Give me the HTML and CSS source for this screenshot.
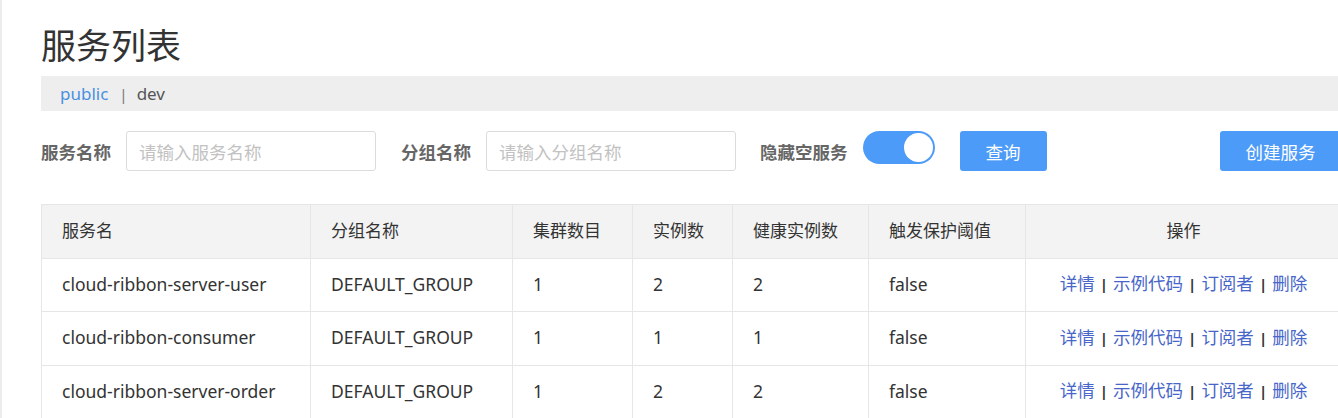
FILE: index.html
```html
<!DOCTYPE html>
<html lang="zh-CN">
<head>
<meta charset="utf-8">
<title>服务列表</title>
<link rel="stylesheet" href="styles.css">
</head>
<body>
<div class="page">
  <div class="content">
    <h1 class="title">服务列表</h1>
    <div class="ns-bar">
      <span class="ns ns-active">public</span>
      <span class="ns-sep">|</span>
      <span class="ns">dev</span>
    </div>
    <div class="filters">
      <label class="f-label">服务名称</label>
      <input class="f-input" type="text" placeholder="请输入服务名称">
      <label class="f-label f-label-2">分组名称</label>
      <input class="f-input" type="text" placeholder="请输入分组名称">
      <label class="f-label f-label-3">隐藏空服务</label>
      <span class="switch"><span class="knob"></span></span>
      <button class="btn btn-query">查询</button>
      <button class="btn btn-create">创建服务</button>
    </div>
    <table class="grid">
      <colgroup>
        <col class="c1"><col class="c2"><col class="c3"><col class="c4"><col class="c5"><col class="c6"><col class="c7">
      </colgroup>
      <thead>
        <tr>
          <th>服务名</th><th>分组名称</th><th>集群数目</th><th>实例数</th><th>健康实例数</th><th>触发保护阈值</th><th class="center">操作</th>
        </tr>
      </thead>
      <tbody>
        <tr>
          <td>cloud-ribbon-server-user</td><td>DEFAULT_GROUP</td><td>1</td><td>2</td><td>2</td><td>false</td>
          <td class="center"><a class="op">详情</a><span class="op-sep">|</span><a class="op">示例代码</a><span class="op-sep">|</span><a class="op">订阅者</a><span class="op-sep">|</span><a class="op">删除</a></td>
        </tr>
        <tr>
          <td>cloud-ribbon-consumer</td><td>DEFAULT_GROUP</td><td>1</td><td>1</td><td>1</td><td>false</td>
          <td class="center"><a class="op">详情</a><span class="op-sep">|</span><a class="op">示例代码</a><span class="op-sep">|</span><a class="op">订阅者</a><span class="op-sep">|</span><a class="op">删除</a></td>
        </tr>
        <tr>
          <td>cloud-ribbon-server-order</td><td>DEFAULT_GROUP</td><td>1</td><td>2</td><td>2</td><td>false</td>
          <td class="center"><a class="op">详情</a><span class="op-sep">|</span><a class="op">示例代码</a><span class="op-sep">|</span><a class="op">订阅者</a><span class="op-sep">|</span><a class="op">删除</a></td>
        </tr>
      </tbody>
    </table>
  </div>
</div>
</body>
</html>
```

FILE: styles.css
```css
html, body {
  margin: 0;
  padding: 0;
  background: #fff;
  overflow: hidden;
}
body {
  font-family: "Noto Sans", "Noto Sans CJK SC", sans-serif;
  color: #333;
}
.page {
  border-left: 2px solid #ececec;
  min-height: 418px;
  padding-left: 39px;
}
.content {
  width: 1300px;
}
.title {
  margin: 0;
  font-size: 35px;
  font-weight: normal;
  line-height: 44px;
  color: #333;
  font-family: "Noto Sans CJK SC", sans-serif;
  padding-top: 22px;
  height: 76px;
  box-sizing: border-box;
}
.ns-bar {
  height: 35px;
  background: #eeeeee;
  display: flex;
  align-items: center;
  padding-left: 19px;
  font-size: 17px;
}
.ns { color: #555; }
.ns-active { color: #4a90e2; }
.ns-sep {
  color: #777;
  margin: 0 9px 0 11px;
  font-size: 15px;
}
.filters {
  display: flex;
  align-items: center;
  margin-top: 20px;
  height: 40px;
}
.f-label {
  font-family: "Noto Sans CJK SC", sans-serif;
  font-size: 17.5px;
  font-weight: bold;
  color: #666;
  margin-right: 15px;
}
.f-label-2 { margin-left: 25px; }
.f-label-3 { margin-left: 24px; }
.f-input {
  width: 250px;
  height: 40px;
  box-sizing: border-box;
  border: 1px solid #dcdcdc;
  border-radius: 3px;
  padding: 0 12px;
  font-size: 17.5px;
  font-family: "Noto Sans CJK SC", sans-serif;
  outline: none;
}
.f-input::placeholder { color: #c2c2c2; }
.switch {
  width: 72px;
  height: 33px;
  border-radius: 17px;
  background: #4d9bf8;
  align-self: flex-start;
  display: flex;
  align-items: center;
  justify-content: flex-end;
  box-sizing: border-box;
  padding-right: 2px;
}
.knob {
  width: 29px;
  height: 29px;
  border-radius: 50%;
  background: #fff;
}
.btn {
  height: 40px;
  border: none;
  border-radius: 3px;
  background: #4d9bf8;
  color: #fff;
  font-family: "Noto Sans CJK SC", sans-serif;
  font-size: 17.5px;
  padding: 0;
}
.btn-query {
  width: 87px;
  margin-left: 25px;
}
.btn-create {
  width: 121px;
  margin-left: auto;
}
.grid {
  margin-top: 33px;
  width: 1300px;
  border-collapse: collapse;
  table-layout: fixed;
  font-size: 17.5px;
}
.c1 { width: 269px; }
.c2 { width: 202px; }
.c3 { width: 120px; }
.c4 { width: 100px; }
.c5 { width: 136px; }
.c6 { width: 157px; }
.c7 { width: 316px; }
.grid th, .grid td {
  border: 1px solid #e6e6e6;
  text-align: left;
  padding: 0 0 0 20px;
  height: 53.5px;
  box-sizing: border-box;
  white-space: nowrap;
  line-height: 24px;
}
.grid th {
  background: #f3f3f3;
  font-weight: normal;
  font-family: "Noto Sans CJK SC", sans-serif;
  font-size: 17px;
  color: #333;
  padding-bottom: 3px;
}
.grid td { color: #333; padding-bottom: 2px; }
.grid .center { text-align: center; padding-left: 0; }
.op {
  color: #4866c9;
  font-family: "Noto Sans CJK SC", sans-serif;
  font-size: 17.5px;
  cursor: pointer;
}
.op-sep {
  color: #333;
  margin: 0 5px;
  font-size: 15px;
  font-weight: bold;
}
```
